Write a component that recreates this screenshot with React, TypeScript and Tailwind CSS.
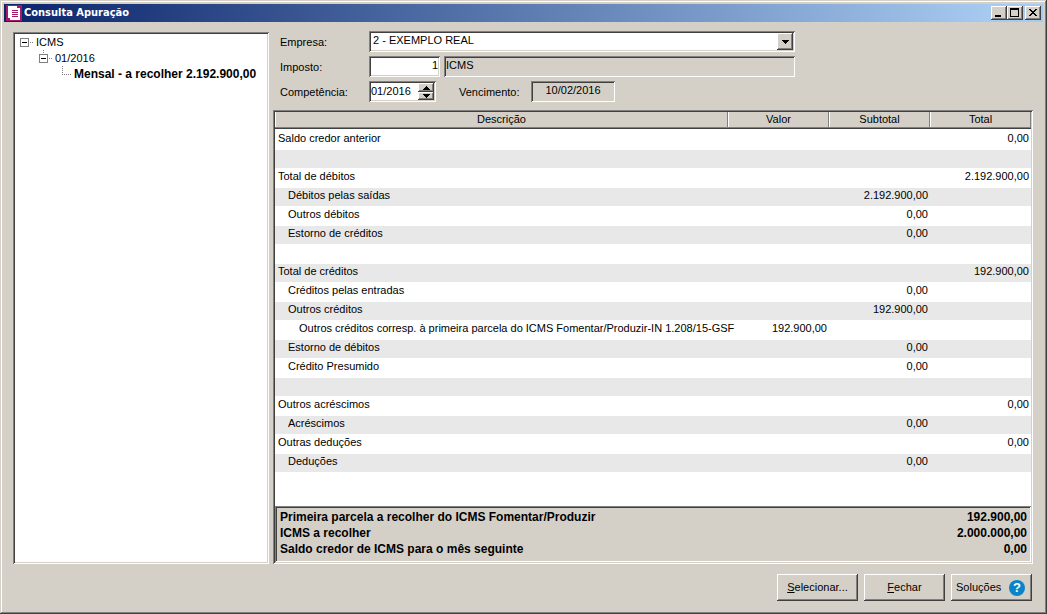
type Row = {
  label?: string;
  level?: 0 | 1 | 2;
  valor?: string;
  subtotal?: string;
  total?: string;
};

const rows: Row[] = [
  { label: "Saldo credor anterior", total: "0,00" },
  {},
  { label: "Total de débitos", total: "2.192.900,00" },
  { label: "Débitos pelas saídas", level: 1, subtotal: "2.192.900,00" },
  { label: "Outros débitos", level: 1, subtotal: "0,00" },
  { label: "Estorno de créditos", level: 1, subtotal: "0,00" },
  {},
  { label: "Total de créditos", total: "192.900,00" },
  { label: "Créditos pelas entradas", level: 1, subtotal: "0,00" },
  { label: "Outros créditos", level: 1, subtotal: "192.900,00" },
  {
    label:
      "Outros créditos corresp. à primeira parcela do ICMS Fomentar/Produzir-IN 1.208/15-GSF",
    level: 2,
    valor: "192.900,00",
  },
  { label: "Estorno de débitos", level: 1, subtotal: "0,00" },
  { label: "Crédito Presumido", level: 1, subtotal: "0,00" },
  {},
  { label: "Outros acréscimos", total: "0,00" },
  { label: "Acréscimos", level: 1, subtotal: "0,00" },
  { label: "Outras deduções", total: "0,00" },
  { label: "Deduções", level: 1, subtotal: "0,00" },
];

const summary = [
  ["Primeira parcela a recolher do ICMS Fomentar/Produzir", "192.900,00"],
  ["ICMS a recolher", "2.000.000,00"],
  ["Saldo credor de ICMS para o mês seguinte", "0,00"],
];

const indent = ["pl-[3px]", "pl-[13px]", "pl-6"];

// Classic Windows bevels
const sunken =
  "shadow-[inset_1px_1px_0_#808080,inset_-1px_-1px_0_#ffffff,inset_2px_2px_0_#404040,inset_-2px_-2px_0_#d4d0c8]";
const raised =
  "bg-[#d4d0c8] shadow-[inset_-1px_-1px_0_#404040,inset_1px_1px_0_#ffffff,inset_-2px_-2px_0_#808080]";

function AppIcon() {
  return (
    <svg width="16" height="16" viewBox="0 0 16 16" shapeRendering="crispEdges">
      <rect width="16" height="16" fill="#a3186c" />
      <path d="M2 1h9v2h3v12H4v-2H2z" fill="#fff" />
      <path d="M6 5h6v1H6zM6 7h6v1H6zM6 9h6v1H6zM6 11h6v1H6z" fill="#a3186c" />
    </svg>
  );
}

function Expander({ child = false }: { child?: boolean }) {
  return (
    <button type="button" aria-label="Recolher" className="h-4 w-[18px] shrink-0">
      <svg width="18" height="16" viewBox="0 0 18 16" fill="none" shapeRendering="crispEdges">
        {child && <path d="M6.5 0v4" stroke="#808080" strokeDasharray="1 1" />}
        <rect x="2.5" y="4.5" width="8" height="8" stroke="#808080" />
        <path d="M4 8.5h5" stroke="#000" />
        <path d="M12 8.5h4" stroke="#808080" strokeDasharray="1 1" />
      </svg>
    </button>
  );
}

function Tree() {
  return (
    <nav className={`w-64 shrink-0 bg-white p-[2px] mt-px ${sunken}`}>
      <ul className="pl-[3px] leading-4">
        <li>
          <div className="flex h-4">
            <Expander />
            <span>ICMS</span>
          </div>
          <ul className="pl-[19px]">
            <li>
              <div className="flex h-4">
                <Expander child />
                <span>01/2016</span>
              </div>
              <ul className="pl-[19px]">
                <li className="flex h-4">
                  <svg
                    width="18"
                    height="16"
                    viewBox="0 0 18 16"
                    fill="none"
                    shapeRendering="crispEdges"
                    className="shrink-0"
                  >
                    <path d="M6.5 0v8M6 8.5h10" stroke="#808080" strokeDasharray="1 1" />
                  </svg>
                  <span className="text-[12px] font-bold whitespace-nowrap">
                    Mensal - a recolher 2.192.900,00
                  </span>
                </li>
              </ul>
            </li>
          </ul>
        </li>
      </ul>
    </nav>
  );
}

function Filters() {
  return (
    <form className="flex flex-col gap-1 pl-[7px]">
      <div className="flex h-[21px]">
        <label htmlFor="empresa" className="w-[89px] leading-[22px]">
          Empresa:
        </label>
        <div className={`relative w-[426px] bg-white p-[2px] ${sunken}`}>
          <select
            id="empresa"
            className="block h-[14px] w-full appearance-none pl-[2px] leading-[14px] outline-none"
          >
            <option>2 - EXEMPLO REAL</option>
          </select>
          <span
            className={`pointer-events-none absolute top-[2px] right-[2px] flex h-[17px] w-4 items-center justify-center ${raised}`}
          >
            <svg width="7" height="4" viewBox="0 0 7 4" shapeRendering="crispEdges">
              <path d="M0 0h7v1H6v1H5v1H4v1H3V3H2V2H1V1H0z" />
            </svg>
          </span>
        </div>
      </div>

      <div className="flex h-[21px]">
        <label htmlFor="imposto" className="w-[89px] leading-[22px]">
          Imposto:
        </label>
        <input
          id="imposto"
          defaultValue="1"
          className={`w-[71px] bg-white px-[2px] pb-[3px] text-right outline-none ${sunken}`}
        />
        <input
          aria-label="Nome do imposto"
          readOnly
          value="ICMS"
          className="ml-1 w-[351px] px-[2px] pb-[3px] outline-none shadow-[inset_1px_1px_0_#808080,inset_-1px_-1px_0_#ffffff,inset_2px_2px_0_#404040]"
        />
      </div>

      <div className="flex h-[21px]">
        <label htmlFor="competencia" className="w-[89px] leading-[22px]">
          Competência:
        </label>
        <div className={`flex w-[67px] bg-white p-[2px] ${sunken}`}>
          <input
            id="competencia"
            defaultValue="01/2016"
            className="min-w-0 flex-1 pb-px outline-none"
          />
          <div className="flex w-4 flex-col">
            <button
              type="button"
              aria-label="Próxima"
              className={`flex h-[9px] items-center justify-center ${raised}`}
            >
              <svg width="7" height="4" viewBox="0 0 7 4" shapeRendering="crispEdges">
                <path d="M3 0h1v1h1v1h1v1h1v1H0V3h1V2h1V1h1z" />
              </svg>
            </button>
            <button
              type="button"
              aria-label="Anterior"
              className={`flex h-2 items-center justify-center ${raised}`}
            >
              <svg width="7" height="4" viewBox="0 0 7 4" shapeRendering="crispEdges">
                <path d="M0 0h7v1H6v1H5v1H4v1H3V3H2V2H1V1H0z" />
              </svg>
            </button>
          </div>
        </div>
        <label htmlFor="vencimento" className="ml-[23px] w-[72px] leading-[22px]">
          Vencimento:
        </label>
        <input
          id="vencimento"
          readOnly
          value="10/02/2016"
          className="w-[84px] pb-[3px] text-center outline-none shadow-[inset_1px_1px_0_#808080,inset_-1px_-1px_0_#ffffff,inset_2px_2px_0_#404040]"
        />
      </div>
    </form>
  );
}

function Statement() {
  const head =
    "h-[17px] p-0 font-normal leading-[15px] align-top shadow-[inset_0_-1px_0_#404040,inset_0_-2px_0_#808080,inset_1px_0_0_#ffffff,inset_-1px_0_0_#808080]";
  return (
    <section className={`mt-2 flex flex-1 flex-col bg-white p-[2px] ${sunken}`}>
      <table className="w-full table-fixed border-collapse">
        <thead className="bg-[#d4d0c8]">
          <tr>
            <th className={head}>Descrição</th>
            <th className={`w-[101px] ${head}`}>Valor</th>
            <th className={`w-[101px] ${head}`}>Subtotal</th>
            <th className={`w-[101px] ${head}`}>Total</th>
          </tr>
          <tr className="h-[2px] bg-white">
            <td colSpan={4} className="p-0" />
          </tr>
        </thead>
        <tbody>
          {rows.map((row, i) => (
            <tr
              key={i}
              className="h-[19px] align-top leading-[14px] whitespace-nowrap even:bg-[#e8e8e8] even:shadow-[inset_0_-1px_0_#ffffff]"
            >
              <td className={`p-0 ${indent[row.level ?? 0]}`}>{row.label}</td>
              <td className="p-0 pr-[2px] text-right">{row.valor}</td>
              <td className="p-0 pr-[2px] text-right">{row.subtotal}</td>
              <td className="p-0 pr-[2px] text-right">{row.total}</td>
            </tr>
          ))}
        </tbody>
      </table>

      <dl
        className={`mt-auto bg-[#d4d0c8] pt-[3px] pr-1 pb-[5px] pl-[5px] text-[12px] leading-4 font-bold ${sunken}`}
      >
        {summary.map(([name, value]) => (
          <div key={name} className="flex justify-between">
            <dt>{name}</dt>
            <dd>{value}</dd>
          </div>
        ))}
      </dl>
    </section>
  );
}

export default function App() {
  return (
    <div className="flex min-h-screen flex-col bg-[#d4d0c8] p-1 pb-[13px] font-['Liberation_Sans',Arial,sans-serif] text-[11px] text-black shadow-[inset_-1px_-1px_0_#404040,inset_1px_1px_0_#d4d0c8,inset_-2px_-2px_0_#808080,inset_2px_2px_0_#ffffff]">
      <header className="flex h-[18px] items-center bg-linear-to-r/srgb from-[#0a246a] to-[#a6caf0] to-95% px-[2px]">
        <AppIcon />
        <h1 className="ml-[2px] font-['DejaVu_Sans_Condensed','DejaVu_Sans',sans-serif] text-[11px] font-bold text-white">
          Consulta Apuração
        </h1>
        <div className="ml-auto flex">
          <button type="button" aria-label="Minimizar" className={`h-[14px] w-4 ${raised}`}>
            <svg width="16" height="14" viewBox="0 0 16 14" shapeRendering="crispEdges">
              <path d="M4 9h6v2H4z" />
            </svg>
          </button>
          <button type="button" aria-label="Maximizar" className={`h-[14px] w-4 ${raised}`}>
            <svg width="16" height="14" viewBox="0 0 16 14" shapeRendering="crispEdges">
              <path d="M3 2h9v9H3zM4 4v6h7V4z" fillRule="evenodd" />
            </svg>
          </button>
          <button type="button" aria-label="Fechar janela" className={`ml-[2px] h-[14px] w-4 ${raised}`}>
            <svg width="16" height="14" viewBox="0 0 16 14" shapeRendering="crispEdges">
              <path d="M4 3h2v1h1v1h2V4h1V3h2v1h-1v1h-1v1H9v1h1v1h1v1h1v1h-2V9H9V8H7v1H6v1H4V9h1V8h1V7h1V6H6V5H5V4H4z" />
            </svg>
          </button>
        </div>
      </header>

      <main className="flex flex-1 gap-1 pt-[9px] pr-[10px] pl-[9px]">
        <Tree />
        <div className="flex min-w-0 flex-1 flex-col">
          <Filters />
          <Statement />
        </div>
      </main>

      <footer className="flex justify-end gap-1.5 pt-[10px] pr-[11px]">
        <button type="button" className={`h-[27px] w-[81px] ${raised}`}>
          <u>S</u>elecionar...
        </button>
        <button type="button" className={`h-[27px] w-[81px] ${raised}`}>
          <u>F</u>echar
        </button>
        <button
          type="button"
          className={`flex h-[27px] w-[81px] items-center justify-between pr-[7px] pl-[5px] ${raised}`}
        >
          Soluções
          <span className="flex size-4 items-center justify-center rounded-full bg-[#0a84c8] text-[13px] font-bold text-white">
            ?
          </span>
        </button>
      </footer>
    </div>
  );
}
